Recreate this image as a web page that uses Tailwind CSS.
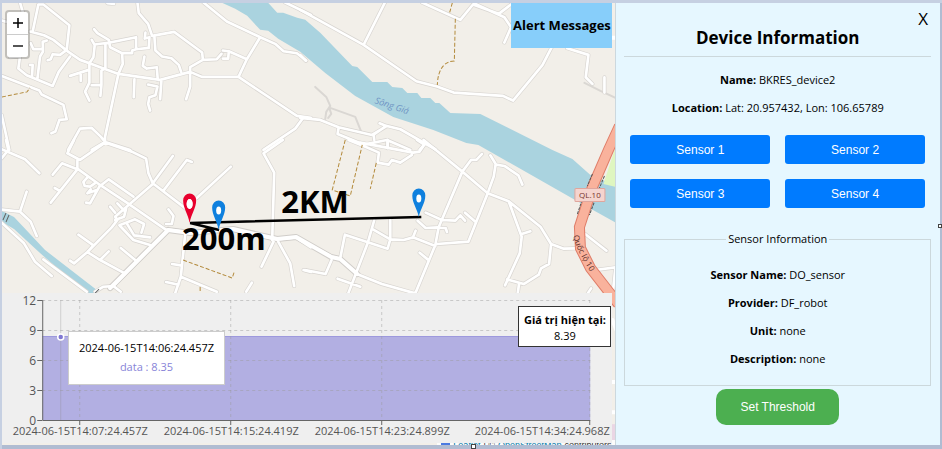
<!DOCTYPE html>
<html lang="en">
<head>
<meta charset="utf-8">
<meta name="viewport" content="width=device-width, initial-scale=1">
<title>Device monitoring</title>
<script src="https://cdn.jsdelivr.net/npm/@tailwindcss/browser@4"></script>
</head>
<body class="min-h-screen flex bg-[#c6d0e2] pt-[3px] pl-[2px] font-['Open_Sans','Noto_Sans',sans-serif] text-black">
<div class="relative flex grow border-r-2 border-b-4 border-[#b0bcd2]">

  <main class="relative grow min-w-0 overflow-hidden bg-[#f2efe9]">
    <svg class="absolute inset-0 w-full h-full" viewBox="2 3 613 442" preserveAspectRatio="xMidYMid slice" role="img" aria-label="Map">
      <defs>
        <g id="lanes" fill="none" stroke-linecap="round" stroke-linejoin="round">
          <g transform="scale(.33333)">
            <path d="M98 95L115 14L130 14L208 76L200 150L180 165L158 163L152 178L143 181M90 95L132 106L160 120L205 156L240 180L268 190L355 222L480 240L570 216L605 231L715 231L890 348L932 354M60 8L68 35M5 62L20 66M30 172L60 170L55 206L80 226L158 258L176 216L210 170M90 195L98 195L96 228M140 122L128 126L129 155L120 170L112 238M92 130L100 148L124 148M5 228L118 272L125 284L190 315L200 358L178 360L166 395L154 400M210 228L266 210M242 220V243M282 88L292 100L326 120L330 142L366 160L368 192L355 222L315 410L315 426L275 450M275 120L284 136L280 172L268 190L268 248L255 275L268 302M284 134L330 128L408 112V148L396 152V160L366 160M316 132V205L304 212V255L275 256M304 255L301 288M408 148L446 144L448 112L434 116L436 98M412 8L416 40L444 72L456 108L522 96L606 158L608 178M463 112L466 152L486 170L514 175L536 195L543 216M570 216L570 202L608 180L650 178L664 162M668 152L686 154L684 176L668 176M686 154L740 178M433 170L428 198L440 206L470 202L473 240M403 238L401 292M484 240L480 298M444 254L472 260L466 286L448 292L444 312L450 332M570 216L570 260L558 298M610 8L680 65L780 112L825 132L850 154L890 160L918 182M780 112L740 178L715 231M204 450L240 386L275 384L302 410L315 426L390 450M790 450L885 386L908 355M5 345L28 450M855 8L932 45M322 10L342 12"/>
          </g>
          <g transform="translate(300 0) scale(.33333)">
            <path d="M0 30L190 135L348 244L410 260L460 278L608 288L638 302L726 196L756 138M190 135L254 8M365 8L480 60L518 14L595 42L632 14M520 10L612 52L632 82L612 128M800 145L864 165L856 232L876 252M912 232V278M0 165L16 182M0 354L60 360L115 382L215 405L260 378L300 388L405 448M115 384L112 402L190 434L260 420L330 450M238 370L258 378L220 404L222 420M262 422V445M372 434L358 450"/>
          </g>
          <g transform="translate(0 140) scale(.33333)">
            <path d="M18 0L25 30L5 55M5 28L75 58L118 100M204 450M222 0L202 40L240 60L315 8L395 35L438 56L445 100L458 130L518 48M232 62L232 86L300 135L380 188L496 268L560 276M158 104L186 70L232 88L152 188M164 144L178 152M575 66L560 60L490 152M458 130L560 208M590 174L692 80M262 112L250 126L254 138L270 140L284 130M272 148L262 160L290 150M300 136L270 190L258 188M300 138L326 118L400 170M458 132L345 230L352 240L335 262L262 336L222 370L210 362M330 200L345 218M352 190L375 215M378 206L372 230L345 240M358 256L405 238L432 252L424 278M380 250L402 286L450 292M360 258L400 300L450 315M505 208L520 228L515 252L498 252M506 270L340 438L310 440L285 455M235 284L280 316L262 336L300 360L370 398M300 360L326 334M362 324L408 362M556 275L542 410L525 460M516 372L542 376M498 426L535 434M542 410L650 455M0 208L60 215L80 155M60 215L92 245L110 288M5 248L72 310L105 365L155 408M130 358L260 455M848 0L790 40L822 98L816 300M700 270L830 298L886 292L932 322M820 305L784 380M834 305L870 370L882 438M910 390L932 396M755 428L738 455M340 438L362 455"/>
          </g>
          <g transform="translate(300 140) scale(.33333)">
            <path d="M0 300L95 350L120 356L170 402L245 432L345 460L405 315L415 262L486 95L512 60L528 60L545 42M370 0L486 95L562 160L625 184L720 260L752 312L790 326L825 325M350 0L372 14L358 35L338 38L180 8M145 0L190 18L236 38L232 68L265 74L275 60L300 68L335 45M262 0V22M570 46L586 72L580 110L562 160L504 305L410 312M588 74L612 78L654 106L666 134M376 218L425 240L465 242L480 226L494 242M494 218L526 246M352 242L376 264L412 262L436 264L440 276M222 240L202 310L144 460M120 354L134 284L262 326L270 298L218 268M270 240V298L310 300L338 292L346 272M338 292L405 318M358 338L382 358M112 416L180 440M14 390L76 402L94 360M625 184L664 290L658 340L614 436M664 282L690 274M752 312L746 372L722 385L715 404L670 432L620 418M656 432L652 460M854 282L918 332M885 390L945 382L938 450M872 445L862 460"/>
          </g>
        </g>
      </defs>

      <rect x="0" y="0" width="620" height="450" fill="#f2efe9"/>
      <path fill="#aad3df" d="M222 3H268L277 13H283L297 18L305 20L320 33L352 66L357 67L372 82H387L392 87L402 88L407 93H417L421 98H430L435 103H439L450 113L480 114L552 150L572 159L590 175L616 186V223L580 203L478 145L466 143L433 130L393 117L355 96L325 73L300 52L278 39L268 31L260 30L247 16L235 9Z"/>
      <path fill="#aad3df" d="M2 211L14 217L45 250L98 291L92 297L78 286L40 253L14 229L2 222Z"/>
      <path fill="#dff6c0" d="M616 144L603 184L616 187Z"/>
      <path fill="#ead6e4" d="M611 424H616V440H611Z"/>
      <g fill="none" stroke="#dad7d3" stroke-width="2" stroke-linecap="round" stroke-linejoin="round">
        <path d="M315 87L326 97L330 106L326 112L325 119M330 108L355 117L361 132M329 108L331 114L328 118M584 83L600 91L615 98"/>
      </g>
      <use href="#lanes" stroke="#d8d5d1" stroke-width="12"/>
      <path fill="none" stroke="#d0cdc9" stroke-linecap="round" stroke-linejoin="round" stroke-width="6" d="M168 230L110 288M168 230L190 233L233 229L277 239L296 237L331 257L340 259L357 274"/>
      <use href="#lanes" stroke="#fff" stroke-width="8"/>
      <path fill="none" stroke="#fff" stroke-width="4" stroke-linecap="round" stroke-linejoin="round" d="M168 230L110 288M168 230L190 233L233 229L277 239L296 237L331 257L340 259L357 274M612 38H616M612 320L616 330M612 382H616M611 412H616"/>
      <g fill="none" stroke="#b38a3b" stroke-width="1" stroke-dasharray="4 2">
        <path d="M2 97L27 92L30 88M452 3L449 14M455 19L454 61Q438 62 437 85M345 140L332 190L350 196L362 145M376 163L370 189M183 260L232 278L234 272M200 287V293"/>
      </g>
      <g stroke="#666" stroke-width="1"><path d="M3 220L6 213M6 222L9 215M94 294L99 289"/></g>
      <g fill="none">
        <path stroke="#df7d68" stroke-width="11" d="M619 126L608 150L592 187L579 227L580 248L590 268L618 304"/>
        <path stroke="#f9b29c" stroke-width="9" d="M619 126L608 150L592 187L579 227L580 248L590 268L618 304"/>
        <path stroke="#555" stroke-dasharray="3 1" d="M592 174L587 186M604 176L599 188M583 196L577 214M595 199L589 215"/>
      </g>
      <g font-family="'Open Sans','Noto Sans',sans-serif">
        <rect x="574.500" y="188.500" width="30" height="13" rx="1" fill="#f5d4ce" stroke="#dfa69d"/>
        <text x="589.500" y="198" font-size="8" text-anchor="middle" fill="#74322b">QL.10</text>
        <text transform="translate(374 103) rotate(19)" font-size="9" font-style="italic" fill="#6f93c4">Sông Giá</text>
        <path id="highway" fill="none" d="M573 236Q574 246 590 272"/>
        <text font-size="8" fill="#5d3029"><textPath href="#highway">Quốc lộ 10</textPath></text>
      </g>
      <path fill="none" stroke="#000" stroke-width="2.500" d="M219 230L190 223L421 217"/>
      <path fill="#e8002d" fill-rule="evenodd" d="M189.500 223C188 214 183 208 183 200.500A6.500 7 0 0 1 196 200.500C196 208 191 214 189.500 223ZM189.500 199A3 5 0 1 0 189.500 209A3 5 0 1 0 189.500 199Z"/>
      <path fill="#fff" d="M189.500 199A3 5 0 1 0 189.500 209A3 5 0 1 0 189.500 199Z"/>
      <g fill="#0f80de">
        <path d="M218.500 230C217 221 212 215 212 207.500A6.500 7 0 0 1 225 207.500C225 215 220 221 218.500 230Z"/>
        <path d="M418.500 217C417 209 412 203 412 195.500A6.500 7 0 0 1 425 195.500C425 203 420 209 418.500 217Z"/>
      </g>
      <g fill="#fff"><ellipse cx="218.500" cy="210.500" rx="2.500" ry="4"/><ellipse cx="418.500" cy="198.500" rx="2.500" ry="4"/></g>
      <g font-family="'Open Sans','Noto Sans',sans-serif" font-weight="700" font-size="31">
        <text x="281" y="213">2KM</text>
        <text x="182" y="250">200m</text>
      </g>
    </svg>

    <div class="absolute left-[3px] top-[7px] w-[25px] flex flex-col rounded-sm border-2 border-black/20 bg-white bg-clip-padding text-black">
      <button aria-label="Zoom in" class="h-[23px] border-b border-[#ccc] flex items-center justify-center"><svg width="10" height="10" viewBox="0 0 10 10"><path d="M0 5H10M5 0V10" stroke="#000" stroke-width="1.500"/></svg></button>
      <button aria-label="Zoom out" class="h-[22px] flex items-center justify-center"><svg width="10" height="10" viewBox="0 0 10 10"><path d="M0 5H10" stroke="#555" stroke-width="2"/></svg></button>
    </div>

    <div class="absolute right-[3px] top-0 h-[45px] w-[101px] flex items-center justify-center bg-[#87cefa] text-[13px] font-bold whitespace-nowrap">Alert Messages</div>

    <div class="absolute right-0 bottom-0 h-[5px] overflow-hidden bg-white/80 px-1 font-['Liberation_Sans',Arial,sans-serif] text-[9px] leading-[10px] text-[#333] flex gap-[3px] whitespace-nowrap">
      <svg class="mt-[2px]" width="9" height="6" viewBox="0 0 9 6"><path fill="#4c7be1" d="M0 0h9v3H0z"/><path fill="#ffd500" d="M0 3h9v3H0z"/></svg>
      <a href="#" class="text-[#0078a8]">Leaflet</a><span>| ©</span><a href="#" class="text-[#0078a8]">OpenStreetMap</a><span>contributors</span>
    </div>

    <section aria-label="Sensor chart" class="absolute left-0 right-[3px] bottom-[2px] h-[150px] bg-[#efefef]">
      <svg class="w-full h-full" viewBox="2 293 610 150" font-family="'Open Sans','Noto Sans',sans-serif" font-size="11" fill="#555">
        <path fill="#8884d8" fill-opacity=".6" d="M42 336H590V420H42Z"/>
        <path fill="none" stroke="#8884d8" stroke-opacity=".5" d="M42 336.500H590"/>
        <path fill="none" stroke="#999" stroke-opacity=".45" stroke-dasharray="3 3" d="M42 300.500H590M42 330.500H590M42 360.500H590M42 390.500H590M79.500 300V420M230.500 300V420M381.500 300V420M589.500 300V420"/>
        <path fill="none" stroke="#888" stroke-opacity=".3" d="M60.500 300V420"/>
        <path fill="none" stroke="#666" d="M42.500 300V420.500H590M37 300.500H42M37 330.500H42M37 360.500H42M37 390.500H42M37 420.500H42M79.500 420V425M230.500 420V425M381.500 420V425M589.500 420V425"/>
        <circle cx="60.500" cy="337" r="3" fill="#8078d2" stroke="#fff" stroke-width="1.500"/>
        <g font-size="12" text-anchor="end"><text x="36" y="305">12</text><text x="36" y="335">9</text><text x="36" y="365">6</text><text x="36" y="395">3</text><text x="36" y="425">0</text></g>
        <g text-anchor="middle"><text x="80" y="435">2024-06-15T14:07:24.457Z</text><text x="231" y="435">2024-06-15T14:15:24.419Z</text><text x="382" y="435">2024-06-15T14:23:24.899Z</text><text x="542" y="435">2024-06-15T14:34:24.968Z</text></g>
      </svg>
      <div class="absolute left-[66px] top-[38px] w-[157px] h-[54px] border border-[#ccc] bg-white text-center text-[11px] leading-[19px] pt-[6px]">
        <p>2024-06-15T14:06:24.457Z</p>
        <p class="text-[#8884d8]">data : 8.35</p>
      </div>
      <div class="absolute right-px top-[13px] w-[93px] h-[41px] border border-[#333] bg-white text-center text-[11px] leading-4 pt-[5px] whitespace-nowrap">
        <p class="font-bold">Giá trị hiện tại:</p>
        <p>8.39</p>
      </div>
    </section>
  </main>

  <aside class="relative w-[34.600%] shrink-0 border-l border-[#ccd8de] bg-[#e6f7ff] pl-2 pr-[9px] text-center text-[11px] leading-4">
    <button aria-label="Close" class="absolute right-3 top-[5px] text-[17px] leading-[22px]">X</button>
    <h1 class="mt-[22px] h-8 border-b border-[#ccd8dc] text-[17px] leading-[26px] font-bold">Device Information</h1>
    <p class="mt-[15px]"><b>Name:</b> BKRES_device2</p>
    <p class="mt-3"><b>Location:</b> Lat: 20.957432, Lon: 106.65789</p>
    <div class="mt-[19px] mx-[6px] grid grid-cols-2 gap-[15px] font-['Liberation_Sans',Arial,sans-serif] text-xs text-white">
      <button class="h-[29px] rounded-[3px] bg-[#007bff]">Sensor 1</button>
      <button class="h-[29px] rounded-[3px] bg-[#007bff]">Sensor 2</button>
      <button class="h-[29px] rounded-[3px] bg-[#007bff]">Sensor 3</button>
      <button class="h-[29px] rounded-[3px] bg-[#007bff]">Sensor 4</button>
    </div>
    <fieldset class="mt-[23px] border border-[#ccd8dc] pt-5 pb-[18px] flex flex-col gap-3">
      <legend class="mx-auto px-[2px]">Sensor Information</legend>
      <p><b>Sensor Name:</b> DO_sensor</p>
      <p><b>Provider:</b> DF_robot</p>
      <p><b>Unit:</b> none</p>
      <p><b>Description:</b> none</p>
    </fieldset>
    <button class="mt-[3px] h-9 px-6 rounded-[10px] bg-[#4caf50] font-['Liberation_Sans',Arial,sans-serif] text-xs text-white">Set Threshold</button>
  </aside>
  <span class="absolute left-1/2 -bottom-1 size-[5px] border border-[#444] bg-white"></span>
  <span class="absolute -right-[2px] top-1/2 size-1 border border-[#444] bg-white"></span>
</div>
</body>
</html>
